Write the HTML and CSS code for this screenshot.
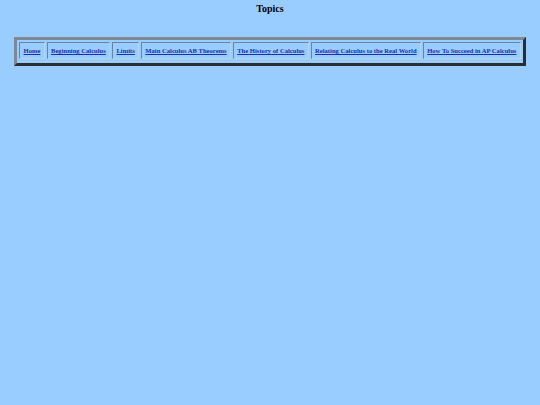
FILE: index.html
```html
<!DOCTYPE html>
<html>
<head>
<meta charset="utf-8">
<link rel="stylesheet" href="styles.css">
</head>
<body>
<h1 class="title">Topics</h1>
<table class="nav">
  <tr>
    <td><a href="#">Home</a></td>
    <td><a href="#">Beginning Calculus</a></td>
    <td><a href="#">Limits</a></td>
    <td><a href="#">Main Calculus AB Theorems</a></td>
    <td><a href="#">The History of Calculus</a></td>
    <td><a href="#">Relating Calculus to the Real World</a></td>
    <td><a href="#">How To Succeed in AP Calculus</a></td>
  </tr>
</table>
</body>
</html>
```
FILE: styles.css
```css
html, body {
  margin: 0;
  padding: 0;
  background: #99ccff;
  font-family: "Liberation Serif", "Times New Roman", serif;
}
body {
  padding: 3px 8px;
}
.title {
  margin: 0;
  text-align: center;
  font-size: 10px;
  font-weight: bold;
  color: #000;
  line-height: 12px;
}
.nav {
  margin: 22px auto 0;
  border-collapse: separate;
  border-spacing: 2px;
  padding: 0 0 2px;
  border-style: solid;
  border-width: 3px;
  border-color: #7d8a96 #2a2e33 #2a2e33 #7d8a96;
}
.nav td {
  border: 1px solid;
  border-color: #6684a6 #b4d4f0 #b4d4f0 #6684a6;
  padding: 4px 3.3px 3px;
  font-size: 6.6px;
  font-weight: bold;
  line-height: 8px;
  white-space: nowrap;
}
.nav a {
  color: #1a2fb0;
  text-decoration: underline;
}
```
